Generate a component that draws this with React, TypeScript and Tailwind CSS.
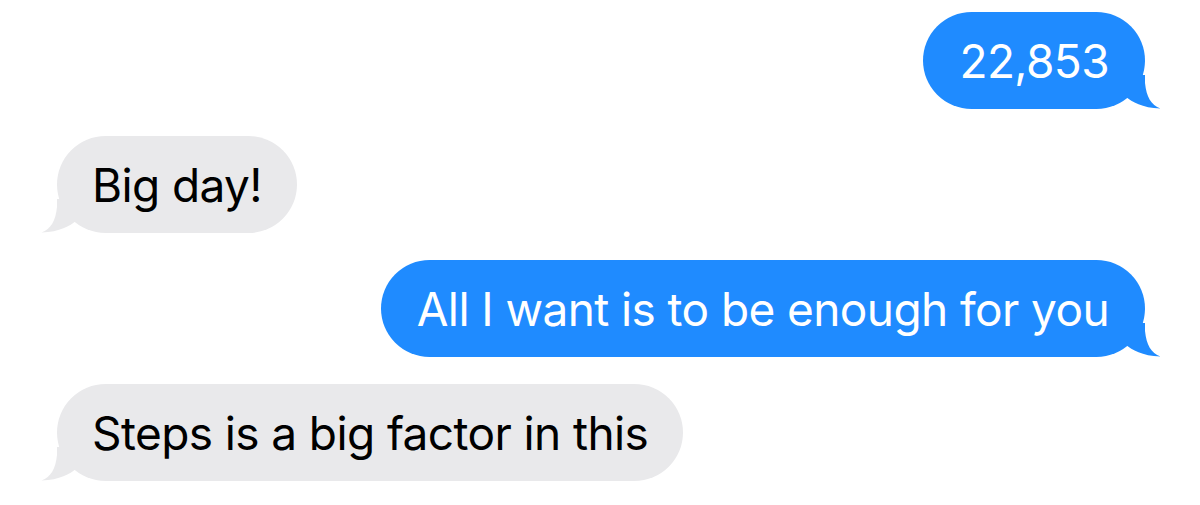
import React from "react";

type Msg = { text: string; me: boolean };

const messages: Msg[] = [
  { text: "22,853", me: true },
  { text: "Big day!", me: false },
  { text: "All I want is to be enough for you", me: true },
  { text: "Steps is a big factor in this", me: false },
];

// tail hangs off the bottom corner of the bubble
const Tail = ({ me }: { me: boolean }) => (
  <svg
    width="44"
    height="34"
    viewBox="0 0 44 34"
    className={
      me
        ? "absolute bottom-0 right-[-16px]"
        : "absolute bottom-0 left-[-16px] -scale-x-100"
    }
  >
    <path
      d="M9 22 C15 26.5 25 33 43.5 33.6 C34 30 29.5 22 28 8 V0 H9 Z"
      fill={me ? "#1f8bff" : "#e9e9eb"}
    />
  </svg>
);

const Bubble = ({ text, me }: Msg) => (
  <div className={me ? "flex justify-end" : "flex justify-start"}>
    <div
      className={
        me
          ? "relative h-[97px] rounded-full bg-[#1f8bff] px-[36px] flex items-center text-white"
          : "relative h-[97px] rounded-full bg-[#e9e9eb] px-[35px] flex items-center text-black"
      }
    >
      <Tail me={me} />
      <span className="relative text-[46px] leading-none tracking-[-0.6px]">{text}</span>
    </div>
  </div>
);

export default function App() {
  return (
    <div
      className="w-[1200px] h-[505px] bg-white flex flex-col gap-[27px] pt-[12px] pl-[57px] pr-[55px] overflow-hidden"
      style={{ fontFamily: "Inter, 'Noto Sans', sans-serif" }}
    >
      {messages.map((m, i) => (
        <Bubble key={i} {...m} />
      ))}
    </div>
  );
}
